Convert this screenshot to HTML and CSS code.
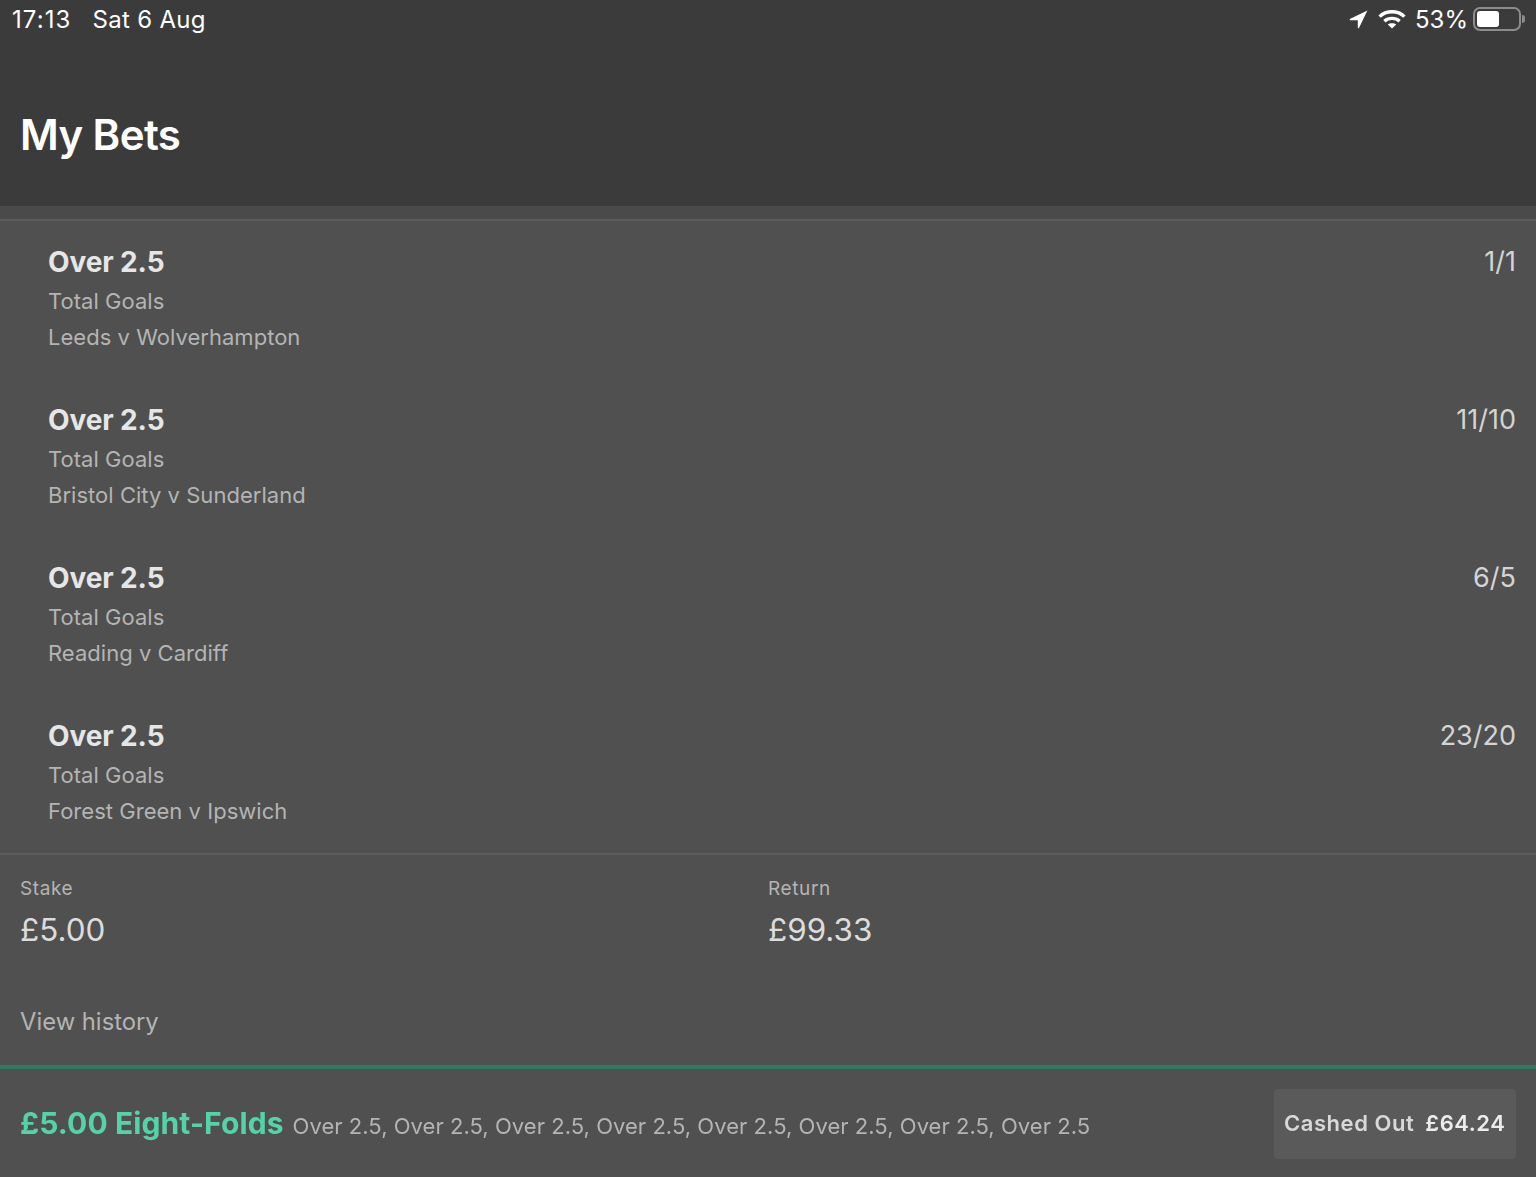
FILE: index.html
```html
<!DOCTYPE html>
<html>
    <head>
        <meta charset="utf-8">
        <title>My Bets</title>
        <link rel="stylesheet" href="styles.css">
    </head>
    <body>
        <header class="top">
            <div class="status">
                <div class="status-left">
                    <span class="clock">17:13</span>
                    <span>Sat 6 Aug</span>
                </div>
                <div class="status-right">
                    <svg class="ico-loc" width="19" height="19" viewBox="0 0 19 19"><path d="M18.4 0.6 L0.8 9 Q0.2 10 1.4 10.2 L8.8 10.2 L8.8 17.8 Q9.3 18.8 10 18 Z" fill="#fff"/></svg>
                    <svg class="ico-wifi" width="28" height="20" viewBox="0 0 28 20" fill="none" stroke="#fff" stroke-width="3.4"><path d="M1.6 7.6 C8 1.2 20 1.2 26.4 7.6"/><path d="M6.4 12.2 C10.4 8.4 17.6 8.4 21.6 12.2"/><path d="M14 19.6 L9.8 15.4 C11.8 13.8 16.2 13.8 18.2 15.4 Z" fill="#fff" stroke="none"/></svg>
                    <span class="pct">53%</span>
                    <div class="battery"><div class="battery-fill"></div></div>
                    <div class="battery-tip"></div>
                </div>
            </div>
            <h1 class="page-title">My Bets</h1>
        </header>
        <div class="band"></div>
        <main class="bet">
            <section class="legs">
                <div class="leg">
                    <div>
                        <div class="leg-name">Over 2.5</div>
                        <div class="leg-sub">Total Goals</div>
                        <div class="leg-sub">Leeds v Wolverhampton</div>
                    </div>
                    <div class="leg-odds">1/1</div>
                </div>
                <div class="leg">
                    <div>
                        <div class="leg-name">Over 2.5</div>
                        <div class="leg-sub">Total Goals</div>
                        <div class="leg-sub">Bristol City v Sunderland</div>
                    </div>
                    <div class="leg-odds">11/10</div>
                </div>
                <div class="leg">
                    <div>
                        <div class="leg-name">Over 2.5</div>
                        <div class="leg-sub">Total Goals</div>
                        <div class="leg-sub">Reading v Cardiff</div>
                    </div>
                    <div class="leg-odds">6/5</div>
                </div>
                <div class="leg">
                    <div>
                        <div class="leg-name">Over 2.5</div>
                        <div class="leg-sub">Total Goals</div>
                        <div class="leg-sub">Forest Green v Ipswich</div>
                    </div>
                    <div class="leg-odds">23/20</div>
                </div>
            </section>
            <section class="totals">
                <div class="total">
                    <div class="total-label">Stake</div>
                    <div class="total-value">£5.00</div>
                </div>
                <div class="total">
                    <div class="total-label">Return</div>
                    <div class="total-value">£99.33</div>
                </div>
            </section>
            <a class="history" href="#">View history</a>
        </main>
        <footer class="next-bet">
            <div class="next-info">
                <span class="next-title">£5.00 Eight-Folds</span>
                <span class="next-legs">Over 2.5, Over 2.5, Over 2.5, Over 2.5, Over 2.5, Over 2.5, Over 2.5, Over 2.5</span>
            </div>
            <div class="cashed">
                <span class="cashed-label">Cashed Out</span>
                <span class="cashed-value">£64.24</span>
            </div>
        </footer>
    </body>
</html>
```

FILE: styles.css
```css
html, body{
    margin:0;
    padding:0;
}

body{
    width:1536px;
    height:1177px;
    overflow:hidden;
    background-color:#505050;
    font-family:Inter, "Liberation Sans", sans-serif;
    color:#b4b4b4;
}

.top{
    height:206px;
    background-color:#3b3b3b;
}

.status{
    display:flex;
    justify-content:space-between;
    align-items:center;
    height:38px;
    padding:0 11px 0 12px;
    color:#fff;
    font-size:24px;
}

.status-left{
    display:flex;
    gap:21px;
    letter-spacing:0.3px;
}

.clock{
    letter-spacing:1.1px;
}

.status-right{
    display:flex;
    align-items:center;
}

.ico-loc{
    margin-right:10px;
}

.ico-wifi{
    margin-right:9px;
}

.pct{
    margin-right:5px;
}

.battery{
    width:48px;
    height:24px;
    box-sizing:border-box;
    border:2px solid #8c8c8c;
    border-radius:7px;
    padding:2px;
}

.battery-fill{
    width:22px;
    height:100%;
    background-color:#fff;
    border-radius:3px;
}

.battery-tip{
    width:3px;
    height:8px;
    margin-left:1px;
    background-color:#8c8c8c;
    border-radius:0 3px 3px 0;
}

.page-title{
    margin:0;
    padding:72px 0 0 20px;
    font-size:42px;
    line-height:50px;
    font-weight:600;
    letter-spacing:-0.6px;
    color:#fff;
}

.band{
    height:13px;
    background-color:#4a4a4a;
    border-bottom:2px solid #5c5c5c;
}

.legs{
    padding:24px 20px 0 48px;
    height:634px;
    box-sizing:border-box;
    border-bottom:2px solid #5c5c5c;
}

.leg{
    display:flex;
    justify-content:space-between;
    height:158px;
}

.leg-name{
    padding-bottom:1px;
    font-size:28px;
    line-height:34px;
    font-weight:700;
    letter-spacing:-0.1px;
    color:#e6e6e6;
}

.leg-sub{
    margin-top:6px;
    font-size:22px;
    line-height:30px;
    letter-spacing:0.03px;
}

.leg-odds{
    font-size:27px;
    line-height:34px;
    color:#d4d4d4;
}

.totals{
    display:grid;
    grid-template-columns:748px 1fr;
    padding:21px 20px 0;
}

.total-label{
    font-size:19px;
    line-height:26px;
    letter-spacing:0.6px;
}

.total-value{
    margin-top:3px;
    font-size:31.4px;
    line-height:50px;
    color:#dcdcdc;
}

.history{
    display:block;
    margin:51px 0 0 20px;
    font-size:23.8px;
    line-height:32px;
    text-decoration:none;
    color:#b4b4b4;
}

.next-bet{
    position:fixed;
    left:0;
    right:0;
    bottom:0;
    height:112px;
    border-top:4px solid #2f7a62;
    box-sizing:border-box;
    display:flex;
    justify-content:space-between;
    align-items:center;
    padding:2px 20px 0 20px;
}

.next-info{
    display:flex;
    align-items:baseline;
    gap:9px;
    margin-top:-2px;
}

.next-title{
    font-size:30px;
    font-weight:700;
    letter-spacing:0.1px;
    color:#54d3a9;
}

.next-legs{
    font-size:22px;
    letter-spacing:0.04px;
}

.cashed{
    display:flex;
    align-items:center;
    gap:11px;
    width:242px;
    height:70px;
    box-sizing:border-box;
    padding:0 10px 2px;
    background-color:#5a5a5a;
    border-radius:4px;
    font-size:22px;
    font-weight:600;
    letter-spacing:0.55px;
    white-space:nowrap;
}

.cashed-label{
    color:#d8d8d8;
}

.cashed-value{
    color:#ececec;
}
```
